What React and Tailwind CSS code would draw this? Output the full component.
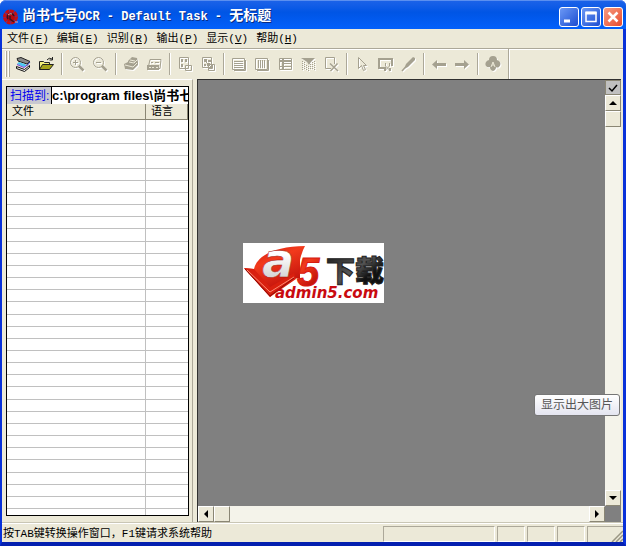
import { useState } from 'react';

const MENUS = [
  { label: '文件', hotkey: 'F' },
  { label: '编辑', hotkey: 'E' },
  { label: '识别', hotkey: 'R' },
  { label: '输出', hotkey: 'P' },
  { label: '显示', hotkey: 'V' },
  { label: '帮助', hotkey: 'H' },
];

const ROWS = Array.from({ length: 32 }, (_, i) => i);

const MONO = "font-['Liberation_Mono','Noto_Sans_CJK_SC',monospace]";
const SANS = "font-['Liberation_Sans','Noto_Sans_CJK_SC',sans-serif]";

// Toolbar glyphs, each on a 16x16 grid
const GLYPHS = {
  scan: (
    <>
      <path d="M2 2.500l4-1 9 4-3 2.500-9-3z" fill="#8a8a8a" stroke="#222" />
      <path d="M4 6l8 3-3 2-7-3z" fill="#49c8f2" />
      <path d="M2 8.500l7 3 4-3" fill="none" stroke="#7d3ddb" />
      <path d="M1.500 10.500l8 3 5-4v2l-5 4-8-3z" fill="#eee" stroke="#111" />
      <path d="M15 6l-3 3.500" fill="none" stroke="#2234b8" />
    </>
  ),
  open: (
    <>
      <path d="M1.500 13.500v-8h4l1 1h5v2" fill="#f2f07a" stroke="#222" />
      <path d="M1.500 13.500l3-5h11l-4 5z" fill="#a5a31a" stroke="#222" />
      <path d="M9 4q2-3 5-1M14.500 1v3h-3" fill="none" stroke="#222" />
    </>
  ),
  zoomIn: (
    <g fill="none" stroke="currentColor">
      <circle cx="6.500" cy="6.500" r="5" />
      <path d="M4 6.500h5M6.500 4v5" />
      <path d="M10 10l4.500 4.500" strokeWidth="2.500" />
    </g>
  ),
  zoomOut: (
    <g fill="none" stroke="currentColor">
      <circle cx="6.500" cy="6.500" r="5" />
      <path d="M4 6.500h5" />
      <path d="M10 10l4.500 4.500" strokeWidth="2.500" />
    </g>
  ),
  recognize: (
    <>
      <path d="M1 8l6-3 8 1v3l-5 5-8-1z" fill="currentColor" />
      <path d="M5 5l4-4 5 1 1 4-5 4-5-1z" fill="currentColor" />
      <path d="M7 4l5 1M6 6l5 1 3-3M2 9l8 2 4-4" stroke="#ece9d8" fill="none" />
    </>
  ),
  pageCheck: (
    <>
      <path d="M4 3.500h11l-1 9H2z" fill="none" stroke="currentColor" />
      <path d="M1 9h12v5H1z" fill="currentColor" />
      <path d="M5 6.500h2M9 6.500h4" stroke="currentColor" />
      <path d="M3 11.500h2M6 11.500h2M10 11.500h2" stroke="#ece9d8" />
    </>
  ),
  blocks: (
    <>
      <path d="M2.500 1.500h9v11h-9zM8.500 9.500h6v5h-6z" fill="none" stroke="currentColor" />
      <path d="M4 3h2v3H4zM8 3h2v3H8zM4 8h2v3H4z" fill="currentColor" />
    </>
  ),
  blocksAuto: (
    <>
      <path d="M2.500 1.500h9v10h-9zM8.500 8.500h6v6h-6z" fill="none" stroke="currentColor" />
      <path d="M4 3h3v3H4zM8 4h3v2H8zM4 8h2v2H4zM7 7h3v3H7z" fill="currentColor" />
      <path d="M5 5l7 7M12.500 9v3.500H9" fill="none" stroke="currentColor" />
    </>
  ),
  horizontal: (
    <>
      <path d="M1.500 2.500h12v11h-12z" fill="none" stroke="currentColor" />
      <path d="M14.500 4v10.500H3" fill="none" stroke="currentColor" />
      <path d="M3 5.500h9M3 7.500h9M3 9.500h9M3 11.500h9" stroke="currentColor" />
    </>
  ),
  vertical: (
    <>
      <path d="M1.500 2.500h12v11h-12z" fill="none" stroke="currentColor" />
      <path d="M14.500 4v10.500H3" fill="none" stroke="currentColor" />
      <path d="M4.500 4v8M6.500 4v8M8.500 4v8M10.500 4v8" stroke="currentColor" />
    </>
  ),
  tableBlock: (
    <>
      <path d="M2.500 2.500h12v11h-12zM6.500 7.500h8M6.500 10.500h8M2 10.500h4" fill="none" stroke="currentColor" />
      <path d="M2 5h13M6 2v12" stroke="currentColor" strokeWidth="2" />
    </>
  ),
  picture: (
    <>
      <path d="M1 2h14l-4 4-2 3-2-3z" fill="currentColor" />
      <path
        d="M2.500 5v9M4.500 6v8M6.500 9v5M8.500 10v5M10.500 8v6M12.500 6v8M14.500 5v9"
        stroke="currentColor"
        strokeDasharray="1 1"
      />
    </>
  ),
  removeBlock: (
    <>
      <path d="M8 12.500H2.500v-11h9V8" fill="none" stroke="currentColor" />
      <path d="M7 7.500l8 7.500M14.500 7.500l-7 7.500" stroke="currentColor" strokeWidth="1.500" />
    </>
  ),
  pointer: (
    <path d="M4.500 1.500v11l3-3 2 5 2-1-2-4h3z" fill="none" stroke="currentColor" />
  ),
  crop: (
    <>
      <path d="M9 12H2V3h13v7" fill="none" stroke="currentColor" strokeWidth="2" />
      <path d="M8.500 7v3l4 4M12.500 7v3l-4 4" fill="none" stroke="currentColor" />
      <path d="M7 12h2v3H7zM12 12h2v3h-2z" fill="currentColor" />
    </>
  ),
  pen: (
    <>
      <path d="M13 1l2 1v2l-7 7-4 2 2-5z" fill="currentColor" />
      <path d="M7 9.500l-5 5.500" stroke="currentColor" strokeWidth="1.500" />
    </>
  ),
  prev: <path d="M1 8.500L6 4v3h9v3H6v3z" fill="currentColor" />,
  next: <path d="M15 8.500L10 4v3H1v3h9v3z" fill="currentColor" />,
  club: (
    <>
      <path
        d="M4 4a4 4 0 0 1 8 0a4 4 0 0 1 2 7q-2 1-3 0q0 3-3 4q-3-1-3-4q-2 1-4-1a4 4 0 0 1 3-6z"
        fill="currentColor"
      />
      <path d="M6 11l2-5 2 5M7 9h2" fill="none" stroke="#ece9d8" />
    </>
  ),
};

const TOOL_GROUPS = [
  [['scan', '扫描'], ['open', '打开']],
  [['zoomIn', '放大'], ['zoomOut', '缩小']],
  [['recognize', '开始识别'], ['pageCheck', '版面校对']],
  [['blocks', '版面分析'], ['blocksAuto', '自动分析']],
  [
    ['horizontal', '横排'],
    ['vertical', '竖排'],
    ['tableBlock', '表格'],
    ['picture', '图像'],
    ['removeBlock', '删除'],
  ],
  [['pointer', '选择'], ['crop', '裁剪'], ['pen', '画笔']],
  [['prev', '上一页'], ['next', '下一页']],
  [['club', '关于']],
];

const ToolButton = ({ icon, title }) => {
  const enabled = icon === 'scan' || icon === 'open';
  return (
    <button
      type="button"
      aria-label={title}
      disabled={!enabled}
      className="flex h-6 w-[23px] items-center justify-center pr-px text-[#a5a190]"
    >
      <svg
        viewBox="0 0 16 16"
        className={enabled ? 'size-4' : 'size-4 drop-shadow-[1px_1px_0_#ffffff]'}
      >
        {GLYPHS[icon]}
      </svg>
    </button>
  );
};

const ScrollButton = ({ label, children }) => (
  <button
    type="button"
    aria-label={label}
    className="flex size-4 shrink-0 items-center justify-center border border-t-white border-r-[#8a8674] border-b-[#8a8674] border-l-white bg-[#ece9d8]"
  >
    <svg viewBox="0 0 8 8" className="size-2">
      {children}
    </svg>
  </button>
);

const CaptionButton = ({ label, danger, children }) => (
  <button
    type="button"
    aria-label={label}
    className={
      danger
        ? 'size-5 rounded-[3px] border border-white bg-linear-to-br from-[#f59a80] to-[#e8492c]'
        : 'size-5 rounded-[3px] border border-white bg-linear-to-br from-[#6c98f5] to-[#1c4bd0]'
    }
  >
    <svg viewBox="0 0 18 18" className="size-full" fill="none" stroke="#fff">
      {children}
    </svg>
  </button>
);

const TitleBar = () => (
  <header className="flex h-[29px] shrink-0 items-center rounded-t-md border-t border-[#5b8ff0] bg-linear-to-b from-[#1b62e8] via-[#0055e5] via-40% to-[#0260fb] pr-[3px] pl-[3px] pt-[3px]">
    <svg viewBox="0 0 16 16" className="mr-[3px] size-4" fill="none">
      <circle cx="7.500" cy="8" r="6" stroke="#c80f12" strokeWidth="3" strokeDasharray="4 0.500" />
      <circle cx="7.500" cy="8" r="4.500" fill="#b80a10" />
      <path d="M5 10q-2-4 2-5q3-1 4 2M7 7v3l4 3" stroke="#3a1420" strokeWidth="1.500" />
      <path d="M5 6q2-2 4-1M12 13h3" stroke="#e8a7a0" />
    </svg>
    <h1
      className={`${MONO} grow text-[14px] leading-5 font-bold whitespace-pre text-white [text-shadow:1px_1px_0_#0a2a80]`}
    >
      尚书七号<span className="text-[12px]">OCR - Default Task - </span>无标题
    </h1>
    <div className="flex gap-[2px]">
      <CaptionButton label="最小化">
        <path d="M4 13h6" strokeWidth="3" />
      </CaptionButton>
      <CaptionButton label="最大化">
        <path d="M4 4.500h10v9H4z" strokeWidth="1.500" />
        <path d="M3.500 5h11" strokeWidth="3" />
      </CaptionButton>
      <CaptionButton label="关闭" danger>
        <path d="M4.500 4.500l9 9M13.500 4.500l-9 9" strokeWidth="2.500" />
      </CaptionButton>
    </div>
  </header>
);

const MenuBar = () => (
  <nav className={`${MONO} flex h-[19px] shrink-0 items-center gap-2 pl-[5px] text-[11px]`}>
    {MENUS.map((menu) => (
      <button key={menu.hotkey} type="button" className="pt-px text-left whitespace-nowrap">
        {menu.label}(<span className="underline">{menu.hotkey}</span>)
      </button>
    ))}
  </nav>
);

const ToolBar = () => (
  <div className="flex h-[31px] shrink-0 items-center border-t border-[#aca899] pl-[3px] shadow-[inset_0_1px_0_#ffffff]">
    <div className="mr-[2px] flex gap-px">
      <span className="h-[26px] w-[2px] border-r border-[#aca899] bg-white" />
      <span className="h-[26px] w-[2px] border-r border-[#aca899] bg-white" />
    </div>
    {TOOL_GROUPS.map((group, i) => (
      <div key={i} className="flex items-center">
        {i > 0 && <span className="mx-[3px] h-[22px] w-[2px] border-l border-[#aca899] bg-white" />}
        {group.map(([icon, title]) => (
          <ToolButton key={icon} icon={icon} title={title} />
        ))}
      </div>
    ))}
    <span className="ml-[3px] h-full w-[2px] border-l border-[#aca899] bg-white" />
  </div>
);

const FilePanel = () => {
  const [path, setPath] = useState('c:\\program files\\尚书七号OCR');

  return (
    <aside className="flex w-[191px] shrink-0 flex-col border-t border-r border-t-white border-r-[#aca899] pt-[6px] pr-[3px] pb-[6px] pl-[4px]">
      <div className="flex min-h-0 grow flex-col border border-black bg-white">
        <div className="flex h-[17px] shrink-0 items-stretch overflow-hidden">
          <label
            htmlFor="scan-path"
            className={`${SANS} w-[45px] shrink-0 border-r border-black bg-[#c8c8d0] pl-[3px] text-[12px] leading-[18px] whitespace-nowrap text-[#0000f0]`}
          >
            扫描到:
          </label>
          <input
            id="scan-path"
            value={path}
            onChange={(e) => setPath(e.target.value)}
            className={`${SANS} w-0 min-w-0 grow text-[13px] leading-4 font-bold outline-none`}
          />
        </div>
        <div className="min-h-0 grow">
          <table className="h-full w-full table-fixed border-separate border-spacing-0">
            <thead className={`${MONO} bg-[#ece9d8] text-left text-[11px] leading-3`}>
              <tr className="h-4">
                <th className="border-r border-b border-[#8a8674] p-0 pl-[5px] font-normal">文件</th>
                <th className="w-[42px] border-r border-b border-[#8a8674] p-0 pl-[5px] font-normal">
                  语言
                </th>
              </tr>
            </thead>
            <tbody>
              {ROWS.map((row) => (
                <tr key={row}>
                  <td className="border-r border-b border-[#c0c0c0] p-0" />
                  <td className="border-b border-[#c0c0c0] p-0" />
                </tr>
              ))}
              <tr className="h-[6px]">
                <td className="border-r border-[#c0c0c0] p-0" />
                <td className="p-0" />
              </tr>
            </tbody>
          </table>
        </div>
      </div>
    </aside>
  );
};

const Viewer = () => (
  <main className="mr-[2px] ml-1 flex min-w-0 grow flex-col border-t border-l border-[#303030]">
    <div className="flex min-h-0 grow">
      <div className="grow bg-[#808080]" />
      <div className="flex w-4 flex-col bg-[#f4f3ea]">
        <button
          type="button"
          aria-label="选中"
          className="flex h-[15px] items-center justify-center border border-[#8a8674] bg-[#c0c0c0]"
        >
          <svg viewBox="0 0 12 10" className="h-[10px] w-3" fill="none" stroke="#000">
            <path d="M2 5l3 3 5-6" strokeWidth="1.500" />
          </svg>
        </button>
        <ScrollButton label="向上滚动">
          <path d="M4 2l4 4H0z" />
        </ScrollButton>
        <ScrollButton label="垂直滑块" />
        <div className="grow" />
        <ScrollButton label="向下滚动">
          <path d="M4 6l4-4H0z" />
        </ScrollButton>
      </div>
    </div>
    <div className="flex h-4 shrink-0 bg-[#f4f3ea]">
      <ScrollButton label="向左滚动">
        <path d="M2 4l4 4V0z" />
      </ScrollButton>
      <ScrollButton label="水平滑块" />
      <div className="grow" />
      <ScrollButton label="向右滚动">
        <path d="M6 4l-4 4V0z" />
      </ScrollButton>
      <span className="w-4 bg-[#808080]" />
    </div>
  </main>
);

const StatusBar = () => (
  <footer
    className={`${MONO} flex h-5 shrink-0 items-stretch gap-[2px] border-t border-[#c9c6b5] pt-[3px] text-[11px] shadow-[inset_0_1px_0_#ffffff]`}
  >
    <p className="grow pl-px leading-4 whitespace-nowrap">按TAB键转换操作窗口，F1键请求系统帮助</p>
    <span className="w-28 border border-t-[#aca899] border-r-white border-b-white border-l-[#aca899]" />
    <span className="w-7 border border-t-[#aca899] border-r-white border-b-white border-l-[#aca899]" />
    <span className="w-7 border border-t-[#aca899] border-r-white border-b-white border-l-[#aca899]" />
    <span className="w-7 border border-t-[#aca899] border-r-white border-b-white border-l-[#aca899]" />
    <span className="flex w-9 items-end justify-end border-t border-l border-[#aca899]">
      <svg viewBox="0 0 12 12" className="size-3" fill="none" stroke="#9a9683">
        <path d="M1 12L12 1M5 12l7-7M9 12l3-3" strokeWidth="1.500" />
      </svg>
    </span>
  </footer>
);

const Logo = () => (
  <svg
    viewBox="0 0 141 60"
    className="h-[60px] w-[141px] overflow-visible bg-white"
    role="img"
    aria-label="a5下载 admin5.com"
  >
    <defs>
      <linearGradient id="red" x1="0" y1="0" x2="0.500" y2="1">
        <stop offset="0" stopColor="#c81408" />
        <stop offset="0.400" stopColor="#f23a1c" />
        <stop offset="1" stopColor="#b80a08" />
      </linearGradient>
      <linearGradient id="silver" x1="0" y1="0" x2="0" y2="1">
        <stop offset="0.400" stopColor="#ffffff" />
        <stop offset="1" stopColor="#c0c0c0" />
      </linearGradient>
      <linearGradient id="ink" x1="0" y1="0" x2="1" y2="1">
        <stop offset="0" stopColor="#111111" />
        <stop offset="0.500" stopColor="#555555" />
        <stop offset="0.700" stopColor="#111111" />
      </linearGradient>
    </defs>
    <path d="M1 25l10 1C14 12 34 3 62 3q-3 5-5 14v18l-9 1-21 18z" fill="url(#red)" />
    <path d="M1 25l10 1 16 18 24-14 2 6-26 18z" fill="#d9200f" />
    <path d="M4 27l23 22 24-15" fill="none" stroke="#ff8b74" />
    <path d="M2 26l25 27 24-18" fill="none" stroke="#8c0c08" />
    <g fontWeight="bold">
      <text
        x="19"
        y="34"
        fontSize="48"
        fontStyle="italic"
        fontFamily="'DejaVu Sans', sans-serif"
        fill="url(#silver)"
        stroke="#a01a10"
        strokeWidth="0.500"
      >
        a
      </text>
      <text
        x="54"
        y="43"
        fontSize="40"
        fontStyle="italic"
        fontFamily="'Liberation Sans', sans-serif"
        fill="url(#red)"
        stroke="#d81a10"
      >
        5
      </text>
    </g>
    <text
      x="83"
      y="39"
      fontSize="29"
      fontWeight="900"
      fontFamily="'Noto Sans CJK SC', sans-serif"
      fill="url(#ink)"
      stroke="#222"
      strokeWidth="1"
    >
      下载
    </text>
    <text
      x="32"
      y="55"
      fontSize="15"
      fontWeight="bold"
      fontStyle="italic"
      fontFamily="'DejaVu Sans', sans-serif"
      fill="#c90a10"
    >
      admin5.com
    </text>
  </svg>
);

const App = () => (
  <div className="relative h-screen overflow-hidden bg-white text-black">
    <div className="flex h-full flex-col rounded-t-md bg-[#0a3fd8]">
      <TitleBar />
      <div className="flex min-h-0 grow flex-col border-r-3 border-b-4 border-l-2 border-[#0831d9] border-b-[#0420b0] bg-[#ece9d8]">
        <MenuBar />
        <ToolBar />
        <div className="flex min-h-0 grow">
          <FilePanel />
          <Viewer />
        </div>
        <StatusBar />
      </div>
    </div>
    <div className="pointer-events-none absolute inset-0 flex items-center justify-center">
      <Logo />
    </div>
    <div
      role="tooltip"
      className={`${SANS} absolute right-[6px] bottom-[130px] rounded-[3px] border border-[#767676] bg-linear-to-b from-white to-[#e4e5f0] px-[6px] text-[12px] leading-5 text-[#575757]`}
    >
      显示出大图片
    </div>
  </div>
);

export default App;
